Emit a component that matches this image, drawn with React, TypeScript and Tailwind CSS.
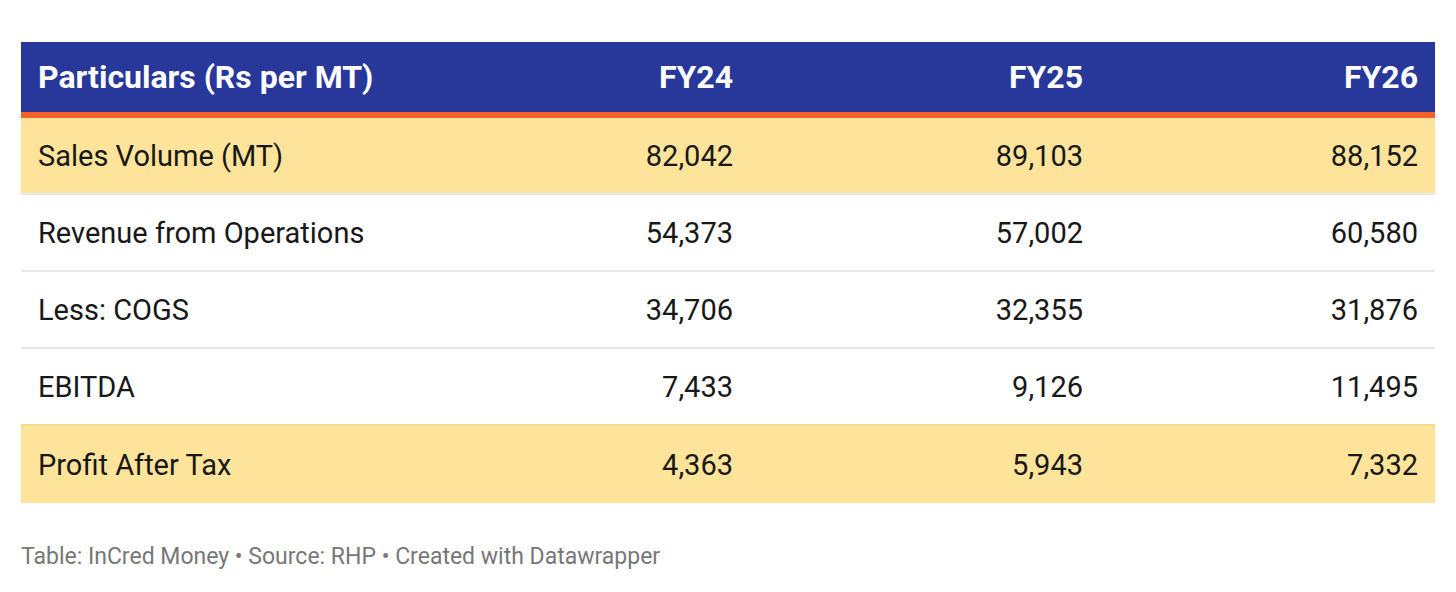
const rows = [
  { label: "Sales Volume (MT)", values: ["82,042", "89,103", "88,152"], highlight: true },
  { label: "Revenue from Operations", values: ["54,373", "57,002", "60,580"] },
  { label: "Less: COGS", values: ["34,706", "32,355", "31,876"] },
  { label: "EBITDA", values: ["7,433", "9,126", "11,495"] },
  { label: "Profit After Tax", values: ["4,363", "5,943", "7,332"], highlight: true },
];

const grid = "grid grid-cols-[379px_350px_350px_335px]";

export default function App() {
  return (
    <div className="w-[1456px] h-[592px] bg-white pt-[42px] px-[21px] font-['Roboto',sans-serif]">
      <div className="w-[1414px]">
        <div className={`${grid} h-[70px] items-center bg-[#27379a] text-white font-bold text-[32px] leading-none border-b-[6px] border-[#f2622a] box-content`}>
          <div className="pl-[17px]">Particulars (Rs per MT)</div>
          <div className="text-right pr-[17px]">FY24</div>
          <div className="text-right pr-[17px]">FY25</div>
          <div className="text-right pr-[17px]">FY26</div>
        </div>
        {rows.map((row, i) => (
          <div
            key={row.label}
            className={`${grid} h-[77px] items-center text-[29px] leading-none pt-[2px] text-[#181818] ${
              row.highlight ? "bg-[#fee49a]" : "bg-white"
            } ${i < rows.length - 1 ? "border-b-2" : ""} ${
              rows[i + 1]?.highlight ? "border-[#f5dc8c]" : "border-[#e8e8e8]"
            }`}
          >
            <div className="pl-[17px]">{row.label}</div>
            {row.values.map((v, j) => (
              <div key={j} className="text-right pr-[17px]">
                {v}
              </div>
            ))}
          </div>
        ))}
      </div>
      <div className="mt-[42px] text-[23px] leading-none text-[#777777]">
        Table: InCred Money • Source: RHP • Created with Datawrapper
      </div>
    </div>
  );
}
